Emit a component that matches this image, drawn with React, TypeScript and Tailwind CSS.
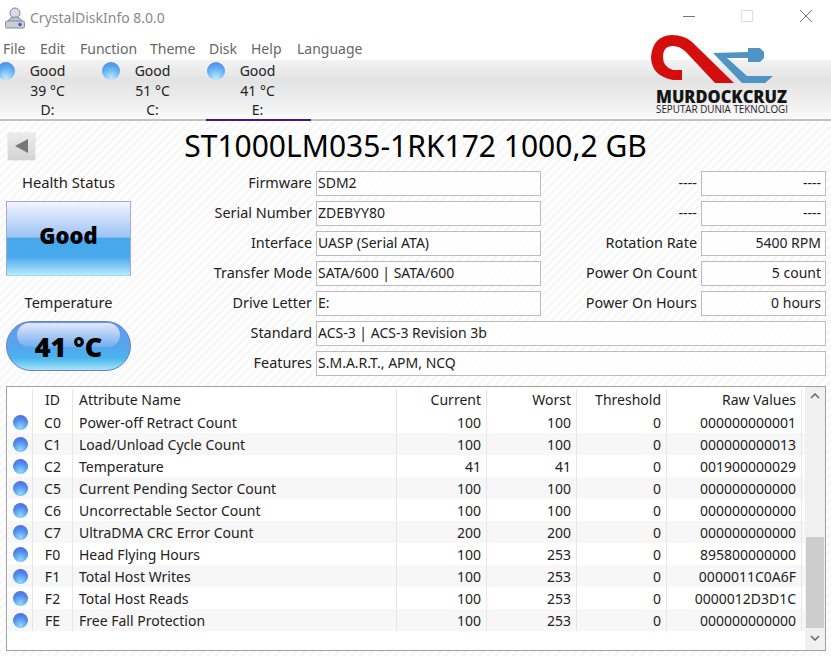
const menu = [
  { name: 'File', x: 'w-[37px]' },
  { name: 'Edit', x: 'w-[40px]' },
  { name: 'Function', x: 'w-[70px]' },
  { name: 'Theme', x: 'w-[59px]' },
  { name: 'Disk', x: 'w-[42px]' },
  { name: 'Help', x: 'w-[46px]' },
  { name: 'Language', x: 'w-[70px]' },
]

const disks = [
  { temp: '39 °C', letter: 'D:', active: false },
  { temp: '51 °C', letter: 'C:', active: false },
  { temp: '41 °C', letter: 'E:', active: true },
]

const attrs = [
  ['C0', 'Power-off Retract Count', '100', '100', '0', '000000000001'],
  ['C1', 'Load/Unload Cycle Count', '100', '100', '0', '000000000013'],
  ['C2', 'Temperature', '41', '41', '0', '001900000029'],
  ['C5', 'Current Pending Sector Count', '100', '100', '0', '000000000000'],
  ['C6', 'Uncorrectable Sector Count', '100', '100', '0', '000000000000'],
  ['C7', 'UltraDMA CRC Error Count', '200', '200', '0', '000000000000'],
  ['F0', 'Head Flying Hours', '100', '253', '0', '895800000000'],
  ['F1', 'Total Host Writes', '100', '253', '0', '0000011C0A6F'],
  ['F2', 'Total Host Reads', '100', '253', '0', '0000012D3D1C'],
  ['FE', 'Free Fall Protection', '100', '253', '0', '000000000000'],
]

function Field({ children, right }: { children: string; right?: boolean }) {
  return (
    <div
      className={`flex h-[25px] items-center border border-[#bcbcbc] bg-white/70 pb-[1px] text-[14px] leading-none text-[#222] ${
        right ? 'justify-end pr-1' : 'pl-[1px]'
      }`}
    >
      {children}
    </div>
  )
}

function Label({ children }: { children: string }) {
  return <div className="flex h-[25px] items-center justify-end pr-[4px] text-[14.4px] leading-none text-[#222]">{children}</div>
}

function Logo() {
  return (
    <svg className="absolute top-[28px] left-[640px]" width="160" height="100" viewBox="0 0 160 100">
      <path
        d="M94 55 L75 55 L46 24 Q40 18 33 18 Q23 18 23 29 Q23 39 33 42 L42 42 L42 52 L33 52 Q12 48 11 30 Q12 8 32 7 Q44 7 52 14 Z"
        fill="#d40d0d"
      />
      <path
        d="M73 25 L108 24 L108 20 L120 20 L124 24 L124 30 L120 34 L108 34 L108 30 L87 30 L107 48 L133 48 L125 55 L102 55 Z"
        fill="#4f94c4"
      />
      <text x="16" y="75" textLength="131" lengthAdjust="spacingAndGlyphs" fontFamily="'Open Sans', sans-serif" fontWeight="800" fontSize="18" fill="#151515">
        MURDOCKCRUZ
      </text>
      <text x="16" y="85" textLength="132" lengthAdjust="spacingAndGlyphs" fontFamily="'Open Sans', sans-serif" fontSize="10.5" fill="#222">
        SEPUTAR DUNIA TEKNOLOGI
      </text>
    </svg>
  )
}

export default function App() {
  return (
    <div className="relative flex h-[656px] w-[831px] flex-col overflow-hidden bg-[repeating-linear-gradient(135deg,#ffffff_0px,#ffffff_3px,#f8f8f8_3px,#f8f8f8_6px)] font-['Noto_Sans',sans-serif] text-[#222]">
      {/* title bar */}
      <div className="flex h-[36px] shrink-0 items-center bg-white pl-[5px]">
        <svg width="20" height="22" viewBox="0 0 20 22">
          <circle cx="10" cy="6" r="5" fill="#d7dde6" stroke="#7d8796" />
          <path d="M3 15 Q4 10 10 10 Q16 10 17 15 Z" fill="#b9c2cf" stroke="#7d8796" />
          <rect x="0.5" y="14" width="19" height="7" rx="1.5" fill="#c9ced6" stroke="#868d98" />
          <circle cx="15" cy="17.5" r="1.7" fill="#3f4fd8" />
        </svg>
        <span className="ml-[5px] pb-[1px] text-[14px] text-[#8a8a8a]">CrystalDiskInfo 8.0.0</span>
        <div className="ml-auto flex items-center pr-[19px] pb-[4px]">
          <div className="h-px w-[12px] bg-[#777]" />
          <div className="ml-[46px] h-[12px] w-[12px] border border-[#dedede]" />
          <svg className="ml-[47px]" width="12" height="12" viewBox="0 0 12 12">
            <path d="M0 0 L12 12 M12 0 L0 12" stroke="#777" strokeWidth="1" />
          </svg>
        </div>
      </div>

      {/* menu */}
      <div className="flex h-[24px] shrink-0 items-center bg-white pl-[3px] text-[14px] text-[#666]">
        {menu.map((m) => (
          <span key={m.name} className={m.x}>
            {m.name}
          </span>
        ))}
      </div>

      {/* disk tabs */}
      <div className="flex h-[61px] shrink-0 border-b-2 border-[#c2c2c2] bg-[linear-gradient(#f3f3f3_0%,#e3e3e3_35%,#f2f2f2_80%,#fbfbfb_100%)]">
        {disks.map((d, i) => (
          <div
            key={d.letter}
            className={`relative flex w-[105px] flex-col items-center pt-[1px] pr-[2px] text-[14px] leading-[19.5px] text-[#222] ${
              i === 0 ? 'ml-[-4px]' : ''
            } ${d.active ? 'mb-[-2px] border-b-2 border-[#3b1a9a]' : ''}`}
          >
            <div className="absolute top-[2px] left-[1px] h-[18px] w-[18px] rounded-full bg-[radial-gradient(circle_at_50%_90%,#c0ebfc_0%,#62aef2_55%,#3f80e0_100%)]" />
            <span>Good</span>
            <span>{d.temp}</span>
            <span>{d.letter}</span>
          </div>
        ))}
      </div>

      {/* drive name */}
      <div className="flex h-[50px] shrink-0 items-center pl-[8px]">
        <div className="flex h-[27px] w-[27px] items-center justify-center bg-[linear-gradient(#ececec,#d4d4d4)] shadow-[0_0_1px_#aaa]">
          <div className="h-0 w-0 border-y-[7px] border-r-[13px] border-y-transparent border-r-[#777]" />
        </div>
        <div className="flex-1 pr-[35px] text-center text-[30px] leading-none text-black">ST1000LM035-1RK172 1000,2 GB</div>
      </div>

      {/* info panel */}
      <div className="flex shrink-0 pl-[6px]">
        <div className="flex w-[125px] flex-col items-center">
          <div className="flex h-[25px] items-center pb-[2px] text-[14.8px] leading-none">Health Status</div>
          <div className="mt-[5px] flex h-[75px] w-full items-center justify-center border border-[#a5a8d8] border-b-[#9fdcf5] bg-[linear-gradient(#f4f4ff_0%,#9cc3f3_48%,#48a8ec_50%,#48a8ec_75%,#b8e9fb_100%)] pb-[7px] text-[22px] font-black text-black">
            Good
          </div>
          <div className="mt-[15px] flex h-[25px] items-center pb-[2px] text-[14.5px] leading-none">Temperature</div>
          <div className="relative mt-[5px] flex h-[50px] w-full items-center justify-center rounded-full border border-[#6d7fc9] bg-[linear-gradient(#5f9cf0_0%,#58a4ee_50%,#48b4ee_75%,#a8e4f8_100%)] text-[27px] font-black text-black">
            <div className="absolute top-[1px] left-[10px] h-[24px] w-[103px] rounded-full bg-[linear-gradient(#e4e8fb,#72aef0)]" />
            <span className="relative pt-[2px]">41 °C</span>
          </div>
        </div>

        <div className="grid w-[695px] grid-cols-[185px_225px_160px_125px] gap-y-[5px]">
          <Label>Firmware</Label>
          <Field>SDM2</Field>
          <Label>----</Label>
          <Field right>----</Field>
          <Label>Serial Number</Label>
          <Field>ZDEBYY80</Field>
          <Label>----</Label>
          <Field right>----</Field>
          <Label>Interface</Label>
          <Field>UASP (Serial ATA)</Field>
          <Label>Rotation Rate</Label>
          <Field right>5400 RPM</Field>
          <Label>Transfer Mode</Label>
          <Field>SATA/600 | SATA/600</Field>
          <Label>Power On Count</Label>
          <Field right>5 count</Field>
          <Label>Drive Letter</Label>
          <Field>E:</Field>
          <Label>Power On Hours</Label>
          <Field right>0 hours</Field>
          <Label>Standard</Label>
          <div className="col-span-3">
            <Field>ACS-3 | ACS-3 Revision 3b</Field>
          </div>
          <Label>Features</Label>
          <div className="col-span-3">
            <Field>S.M.A.R.T., APM, NCQ</Field>
          </div>
        </div>
      </div>

      {/* attribute table */}
      <div className="mt-[10px] ml-[6px] flex h-[265px] w-[820px] shrink-0 border border-[#a0a0a0] bg-white pl-px">
        <div className="flex-1 pt-[2px] text-[14px] leading-none text-[#222]">
          <div className="grid h-[22px] grid-cols-[25px_40px_324px_90px_90px_90px_135px]">
            <div className="border-r border-[#e6e6e6]" />
            <div className="flex items-center justify-center border-r border-[#e6e6e6]">ID</div>
            <div className="flex items-center border-r border-[#e6e6e6] pl-[6px]">Attribute Name</div>
            <div className="flex items-center justify-end border-r border-[#e6e6e6] pr-[5px]">Current</div>
            <div className="flex items-center justify-end border-r border-[#e6e6e6] pr-[5px]">Worst</div>
            <div className="flex items-center justify-end border-r border-[#e6e6e6] pr-[5px]">Threshold</div>
            <div className="flex items-center justify-end border-r border-[#e6e6e6] pr-[5px]">Raw Values</div>
          </div>
          {attrs.map((a, i) => (
            <div
              key={a[0]}
              className={`grid h-[22px] grid-cols-[25px_40px_324px_90px_90px_90px_135px] ${i % 2 === 1 ? 'bg-[#f7f7f7]' : ''}`}
            >
              <div className="flex items-center justify-end border-r border-[#e6e6e6] pr-[4px]">
                <div className="h-[15px] w-[15px] rounded-full bg-[radial-gradient(circle_at_50%_85%,#8fdcfa_0%,#4f8ef0_55%,#5a55d8_100%)]" />
              </div>
              <div className="flex items-center justify-center border-r border-[#e6e6e6] pt-[2px]">{a[0]}</div>
              <div className="flex items-center border-r border-[#e6e6e6] pt-[2px] pl-[6px]">{a[1]}</div>
              <div className="flex items-center justify-end border-r border-[#e6e6e6] pt-[2px] pr-[5px]">{a[2]}</div>
              <div className="flex items-center justify-end border-r border-[#e6e6e6] pt-[2px] pr-[5px]">{a[3]}</div>
              <div className="flex items-center justify-end border-r border-[#e6e6e6] pt-[2px] pr-[5px]">{a[4]}</div>
              <div className="flex items-center justify-end border-r border-[#e6e6e6] pt-[2px] pr-[5px]">{a[5]}</div>
            </div>
          ))}
        </div>

        {/* scrollbar */}
        <div className="flex w-[20px] flex-col items-center bg-[#f0f0f0]">
          <svg className="mt-[6px]" width="10" height="6" viewBox="0 0 10 6">
            <path d="M1 5 L5 1 L9 5" fill="none" stroke="#666" strokeWidth="1.5" />
          </svg>
          <div className="mt-[138px] h-[91px] w-[18px] bg-[#cdcdcd]" />
          <svg className="mt-[7px]" width="10" height="6" viewBox="0 0 10 6">
            <path d="M1 1 L5 5 L9 1" fill="none" stroke="#666" strokeWidth="1.5" />
          </svg>
        </div>
      </div>

      <Logo />
    </div>
  )
}
